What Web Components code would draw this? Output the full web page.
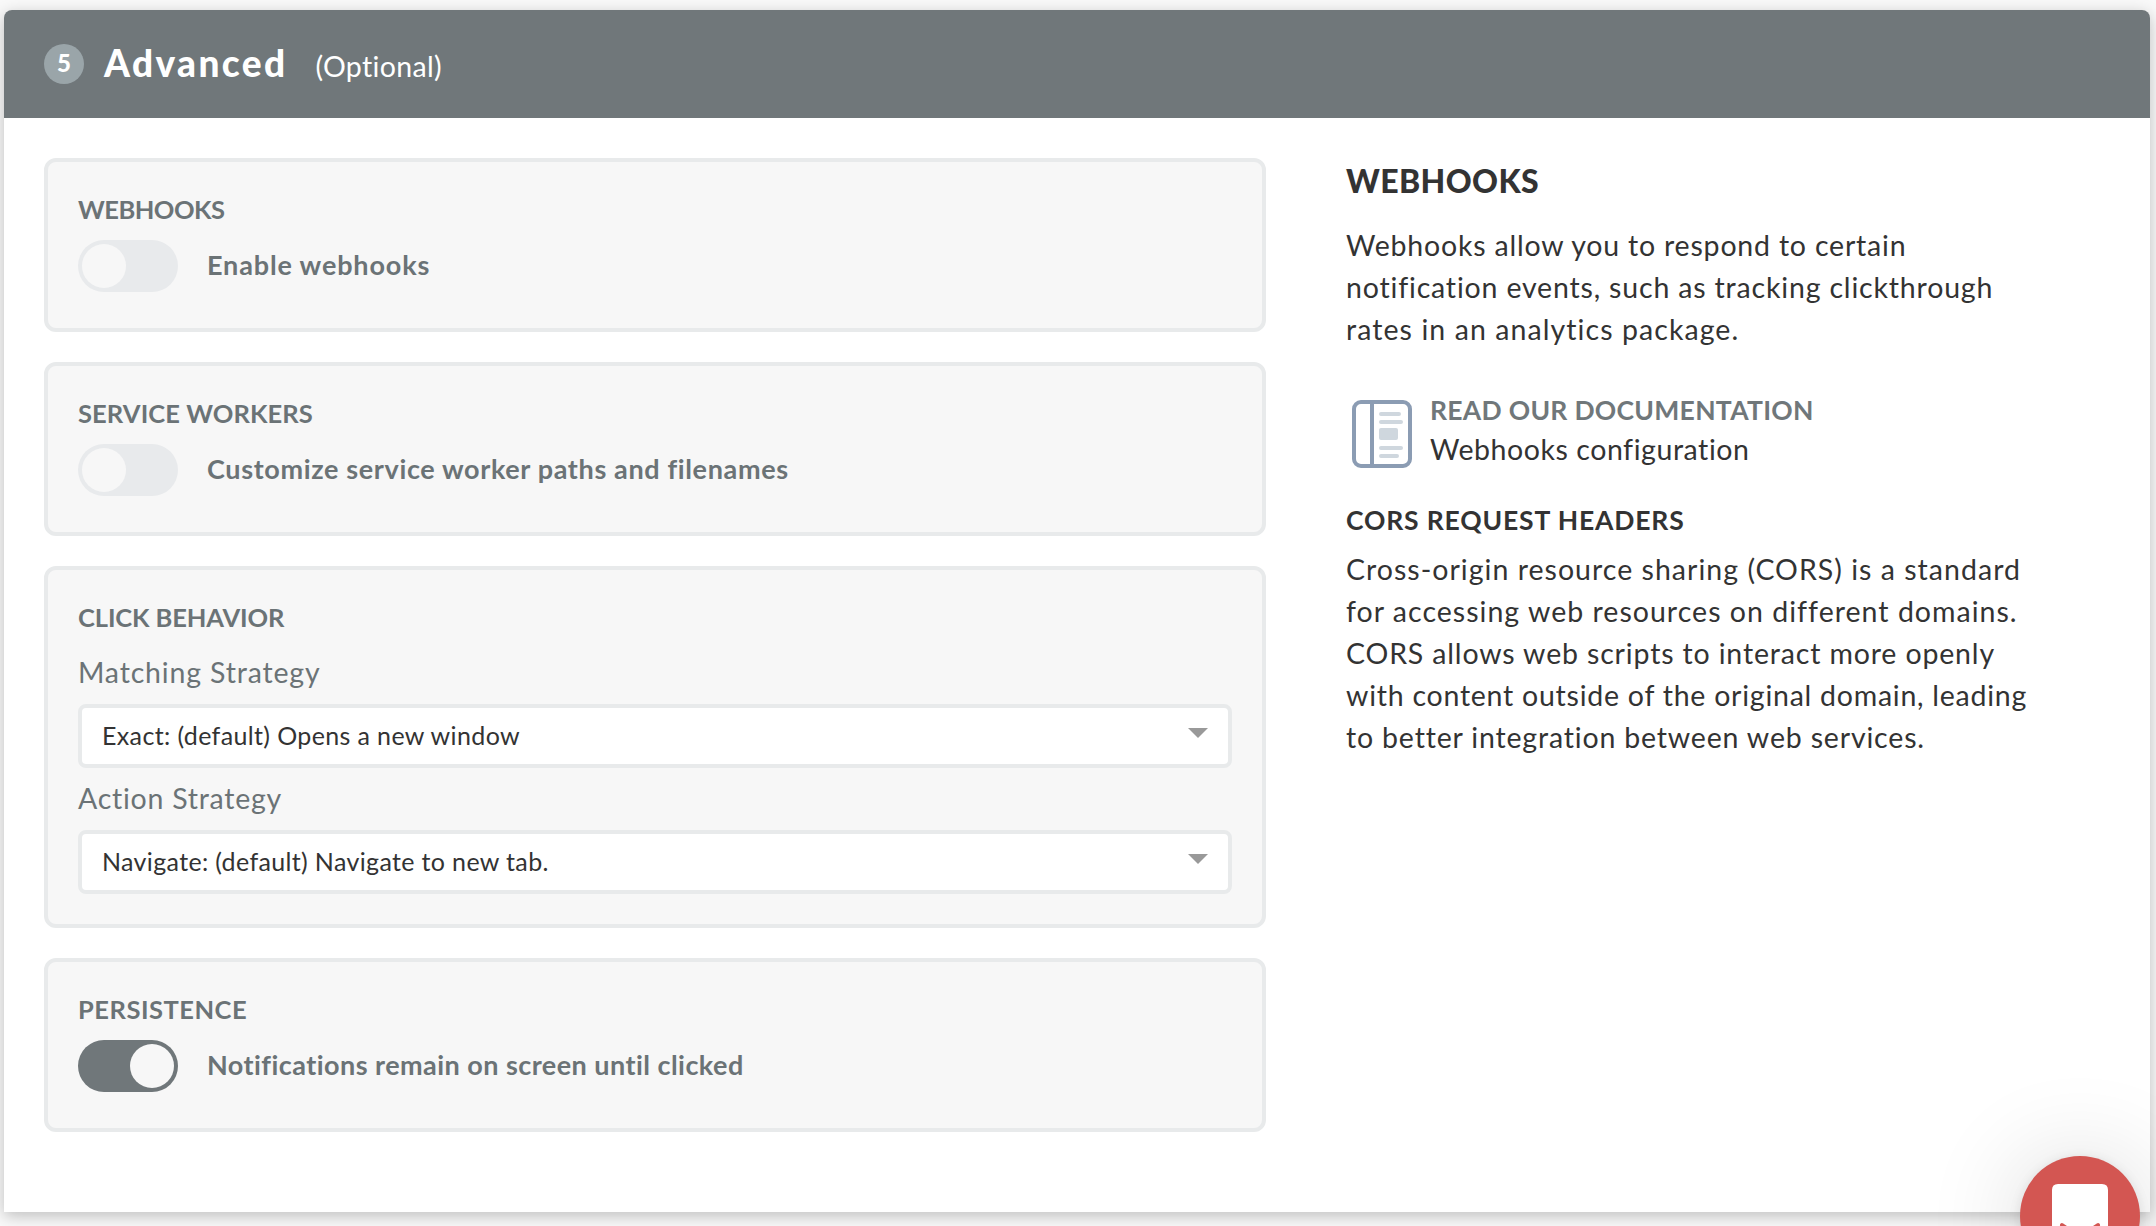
<!DOCTYPE html>
<html lang="en">
<head>
<meta charset="utf-8">
<title>Advanced</title>
<style>
html,body{margin:0;height:100%;overflow:hidden}
body{background:#f9f9f9;font-family:Lato,"Open Sans",sans-serif;color:#333}
</style>
</head>
<body>
<settings-page></settings-page>
<script>
const define = (name, html, init) => customElements.define(name, class extends HTMLElement {
  constructor() {
    super();
    this.attachShadow({ mode: 'open' }).innerHTML = html;
  }
  connectedCallback() { if (init) init.call(this, this.shadowRoot); }
});

/* One line of text; the w attribute is the width its glyphs are tracked to fill. */
define('text-line', `<style>
:host{display:block;white-space:nowrap;font-size:28.5px;line-height:42px}
</style><slot></slot>`, function () {
  const t = this.textContent;
  if (!this.hasAttribute('w') || t.length < 2) return;
  const cs = getComputedStyle(this);
  const c = document.createElement('canvas').getContext('2d');
  c.font = cs.fontWeight + ' ' + cs.fontSize + ' Lato';
  const m = c.measureText(t);
  const ink = m.actualBoundingBoxRight + m.actualBoundingBoxLeft;
  this.style.letterSpacing = ((this.getAttribute('w') - ink) / (t.length - 1)).toFixed(3) + 'px';
});

define('step-header', `<style>
:host{display:flex;align-items:center;height:108px;padding-left:40px;background:#70777a;color:#fff;border-radius:8px 8px 0 0}
.badge{width:40px;height:40px;border-radius:50%;background:#9aa5a9;display:flex;align-items:center;justify-content:center}
.badge text-line{font-size:24px;font-weight:900;line-height:40px;margin-bottom:2px}
.title{font-size:37px;font-weight:900;margin:0 0 3px 20px}
.note{margin:3px 0 0 28px}
</style><div class="badge"><text-line>5</text-line></div><text-line class="title" w="180">Advanced</text-line><text-line class="note" w="125">(Optional)</text-line>`);

define('option-panel', `<style>
:host{display:block;box-sizing:border-box;border:4px solid #e8eaeb;border-radius:12px;background:#f7f7f7;padding:32px 30px 30px;color:#6b7376}
</style><slot name="title"></slot><slot></slot>`);

define('toggle-switch', `<style>
:host{display:flex;align-items:center;gap:29px;margin:16px 0 6px}
.track{box-sizing:border-box;width:100px;height:52px;border-radius:26px;background:#e8eaec;padding:4px;display:flex}
.knob{width:44px;height:44px;border-radius:50%;background:#f7f7f7}
:host([on]) .track{background:#70777a;justify-content:flex-end}
</style><div class="track"><div class="knob"></div></div><slot></slot>`);

define('select-box', `<style>
:host{box-sizing:border-box;display:flex;align-items:center;justify-content:space-between;height:64px;border:4px solid #e8eaeb;border-radius:8px;background:#fff;color:#333;padding:0 20px}
svg{display:block;margin-bottom:6px}
</style><slot></slot><svg width="20" height="10" viewBox="0 0 20 10"><path d="M0 0H20L10 10Z" fill="#999"/></svg>`);

define('doc-link', `<style>
:host{display:flex;height:78px;padding-left:6px;gap:18px}
svg{display:block;margin-top:10px}
div{padding-top:1px}
</style><svg width="60" height="68" viewBox="0 0 60 68"><rect x="2" y="2" width="56" height="64" rx="7" fill="#fff" stroke="#8b9cb3" stroke-width="4"/><path d="M20 2V66" stroke="#8b9cb3" stroke-width="4"/><path d="M29 14H47M29 22H49M29 48H49M29 56H45" stroke="#cfd7de" stroke-width="4" stroke-linecap="round"/><rect x="27" y="28" width="19" height="12" rx="2" fill="#cfd7de"/></svg><div><slot></slot></div>`);

define('chat-launcher', `<style>
:host{position:absolute;left:2020px;top:1156px;width:120px;height:120px;border-radius:50%;background:#d35652;box-shadow:0 2px 12px rgba(0,0,0,.10),0 4px 100px rgba(0,0,0,.16)}
svg{display:block}
</style><svg width="120" height="120" viewBox="0 0 120 120"><path d="M38 28H82Q88 28 88 34V92L72 86H38Q32 86 32 80V34Q32 28 38 28Z" fill="#fff"/><path d="M42 69Q60 83 78 69" fill="none" stroke="#d35652" stroke-width="4" stroke-linecap="round"/></svg>`);

define('settings-page', `<style>
:host{display:block;position:relative;height:1226px;overflow:hidden;padding:10px 6px 14px 4px;box-sizing:border-box}
.card{height:1202px;background:#fff;border-radius:8px 8px 0 0;box-shadow:0 4px 16px rgba(0,0,0,.24)}
.cols{display:flex;padding:40px 0 0 40px;gap:80px}
.left{width:1222px;display:flex;flex-direction:column;gap:30px}
.h{font-size:25.5px;font-weight:700;line-height:30px}
.lab{font-size:27px;font-weight:700;line-height:44px;margin-bottom:3px}
.f{line-height:34px;margin:13px 0 15px}
.f1{margin-top:23px}
.opt{font-size:25px;line-height:40px;margin:0 0 2px}
.right{padding-top:3px}
.big{font-size:32px;font-weight:900;line-height:40px;margin-bottom:23px}
doc-link{margin:40px 0 32px}
.rd{font-size:26.5px;font-weight:700;line-height:39px;color:#70777a}
.wc{line-height:39px}
.sm{font-size:26.5px;font-weight:700;line-height:40px;margin-bottom:8px}
</style>
<div class="card"><step-header></step-header>
<div class="cols"><div class="left">
<option-panel><text-line slot="title" class="h" w="147">WEBHOOKS</text-line><toggle-switch><text-line class="lab" w="220">Enable webhooks</text-line></toggle-switch></option-panel>
<option-panel><text-line slot="title" class="h" w="235">SERVICE WORKERS</text-line><toggle-switch><text-line class="lab" w="580">Customize service worker paths and filenames</text-line></toggle-switch></option-panel>
<option-panel><text-line slot="title" class="h" w="207">CLICK BEHAVIOR</text-line><text-line class="f f1" w="240">Matching Strategy</text-line><select-box><text-line class="opt" w="417">Exact: (default) Opens a new window</text-line></select-box><text-line class="f" w="204">Action Strategy</text-line><select-box><text-line class="opt" w="444">Navigate: (default) Navigate to new tab.</text-line></select-box></option-panel>
<option-panel><text-line slot="title" class="h" w="166">PERSISTENCE</text-line><toggle-switch on><text-line class="lab" w="534">Notifications remain on screen until clicked</text-line></toggle-switch></option-panel>
</div><div class="right">
<text-line class="big" w="192">WEBHOOKS</text-line>
<text-line w="560">Webhooks allow you to respond to certain</text-line>
<text-line w="644">notification events, such as tracking clickthrough</text-line>
<text-line w="390">rates in an analytics package.</text-line>
<doc-link><text-line class="rd" w="380">READ OUR DOCUMENTATION</text-line><text-line class="wc" w="318">Webhooks configuration</text-line></doc-link>
<text-line class="sm" w="337">CORS REQUEST HEADERS</text-line>
<text-line w="671">Cross-origin resource sharing (CORS) is a standard</text-line>
<text-line w="670">for accessing web resources on different domains.</text-line>
<text-line w="648">CORS allows web scripts to interact more openly</text-line>
<text-line w="681">with content outside of the original domain, leading</text-line>
<text-line w="578">to better integration between web services.</text-line>
</div></div></div><chat-launcher></chat-launcher>`);
</script>
</body>
</html>
